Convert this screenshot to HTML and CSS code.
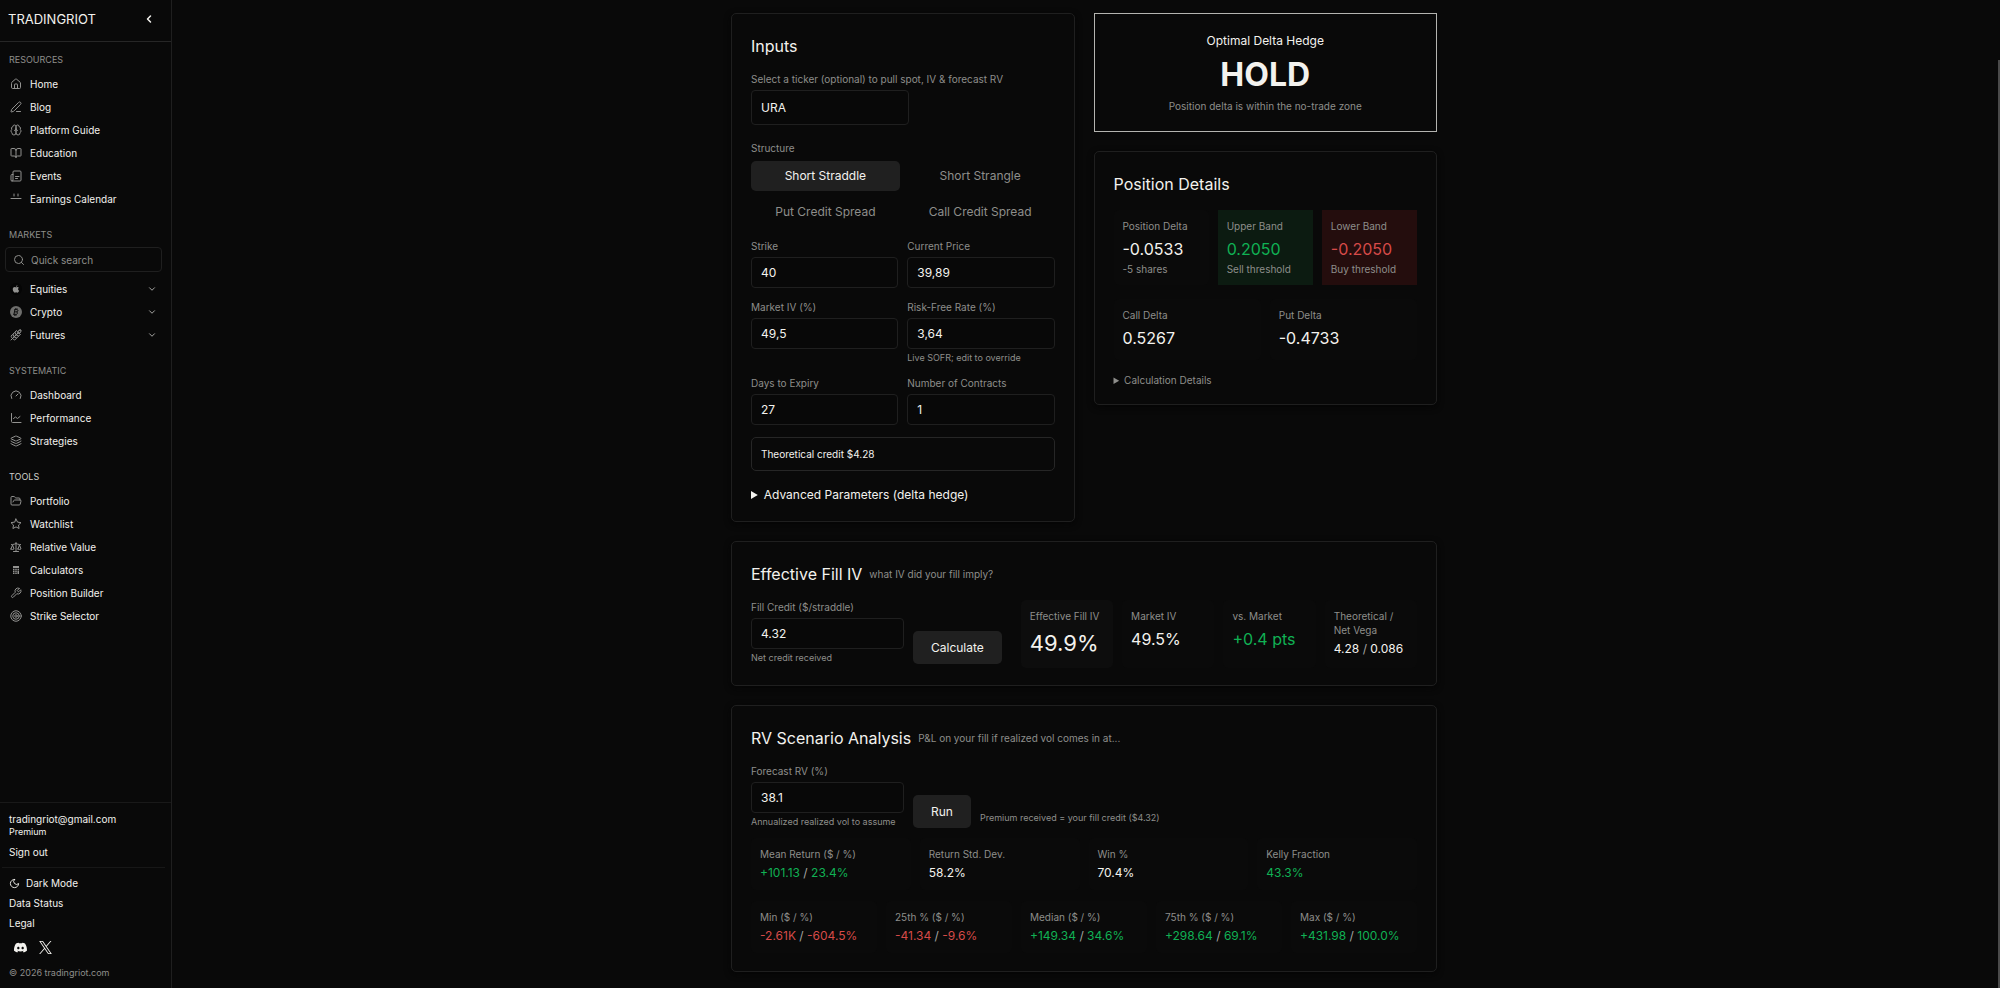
FILE: index.html
```html
<!DOCTYPE html>
<html lang="en">
<head>
<meta charset="utf-8">
<meta name="viewport" content="width=device-width, initial-scale=1">
<title>Short Vol Delta Hedge - TradingRiot</title>
<link rel="stylesheet" href="styles.css">
</head>
<body>
<div class="app">
  <aside class="sidebar">
    <header class="brand">
      <a class="brand-name" href="#">TRADINGRIOT</a>
      <button class="collapse" type="button" aria-label="Collapse sidebar"><svg class="icon" viewBox="0 0 24 24"><path d="m15 18-6-6 6-6"/></svg></button>
    </header>

    <nav class="nav">
      <section class="nav-group">
        <h2 class="nav-label">RESOURCES</h2>
        <a class="nav-item" href="#"><svg class="icon" viewBox="0 0 24 24"><path d="M15 21v-8a1 1 0 0 0-1-1h-4a1 1 0 0 0-1 1v8"/><path d="M3 10a2 2 0 0 1 .709-1.528l7-6a2 2 0 0 1 2.582 0l7 6A2 2 0 0 1 21 10v9a2 2 0 0 1-2 2H5a2 2 0 0 1-2-2z"/></svg>Home</a>
        <a class="nav-item" href="#"><svg class="icon" viewBox="0 0 24 24"><path d="M13 21h8"/><path d="M21.174 6.812a1 1 0 0 0-3.986-3.987L3.842 16.174a2 2 0 0 0-.5.83l-1.321 4.352a.5.5 0 0 0 .623.622l4.353-1.32a2 2 0 0 0 .83-.497z"/></svg>Blog</a>
        <a class="nav-item" href="#"><svg class="icon" viewBox="0 0 24 24"><path d="M12 5a3 3 0 1 0-5.997.125 4 4 0 0 0-2.526 5.77 4 4 0 0 0 .556 6.588A4 4 0 1 0 12 18Z"/><path d="M12 5a3 3 0 1 1 5.997.125 4 4 0 0 1 2.526 5.77 4 4 0 0 1-.556 6.588A4 4 0 1 1 12 18Z"/><path d="M15 13a4.500 4.500 0 0 1-3-4 4.500 4.500 0 0 1-3 4"/></svg>Platform Guide</a>
        <a class="nav-item" href="#"><svg class="icon" viewBox="0 0 24 24"><path d="M12 7v14"/><path d="M3 18a1 1 0 0 1-1-1V4a1 1 0 0 1 1-1h5a4 4 0 0 1 4 4 4 4 0 0 1 4-4h5a1 1 0 0 1 1 1v13a1 1 0 0 1-1 1h-6a3 3 0 0 0-3 3 3 3 0 0 0-3-3z"/></svg>Education</a>
        <a class="nav-item" href="#"><svg class="icon" viewBox="0 0 24 24"><path d="M4 22h16a2 2 0 0 0 2-2V4a2 2 0 0 0-2-2H8a2 2 0 0 0-2 2v16a2 2 0 0 1-4 0v-9a2 2 0 0 1 2-2h2"/><path d="M11 13h7M11 17h4"/></svg>Events</a>
        <a class="nav-item" href="#"><svg class="icon" viewBox="0 0 24 24"><path d="M8 2v4M16 2v4M2 11h20"/></svg>Earnings Calendar</a>
      </section>

      <section class="nav-group">
        <h2 class="nav-label">MARKETS</h2>
        <label class="search">
          <svg class="icon" viewBox="0 0 24 24"><circle cx="11" cy="11" r="8"/><path d="m21 21-4.300-4.300"/></svg>
          <input type="search" placeholder="Quick search" aria-label="Quick search">
        </label>
        <a class="nav-item" href="#"><svg class="icon solid" viewBox="0 0 24 24"><circle class="disc" cx="12" cy="12" r="12"/><path d="M12.200 8.600c.7 0 1.500-.6 2.700-.6 1.100 0 2.200.6 2.800 1.500-2.400 1.400-2 4.800.5 5.800-.6 1.700-2 4-3.500 4-.9 0-1.300-.6-2.500-.6s-1.600.6-2.500.6c-1.800 0-4.200-3.700-4.200-6.800 0-2.900 1.900-4.500 3.800-4.500 1.200 0 2.100.6 2.900.6zM14.900 4.500c.1 1.700-1.200 3.200-2.800 3.200-.1-1.600 1.300-3.100 2.800-3.200z"/></svg>Equities<svg class="icon chevron" viewBox="0 0 24 24"><path d="m6 9 6 6 6-6"/></svg></a>
        <a class="nav-item" href="#"><svg class="icon coin" viewBox="0 0 24 24"><circle cx="12" cy="12" r="12"/><path d="M9.700 7.200 8 16.600M9.700 7.200h4c3.500.4 2.700 4.200-.4 4.500H9.200M13 11.700c3.800.3 2.600 4.900-1 4.900H7.200M11.500 5l-.4 2M14 5.400l-.3 1.800M9.800 17l-.4 2M12.200 17l-.4 2"/></svg>Crypto<svg class="icon chevron" viewBox="0 0 24 24"><path d="m6 9 6 6 6-6"/></svg></a>
        <a class="nav-item" href="#"><svg class="icon" viewBox="0 0 24 24"><path d="M2 22 16 8"/><path d="M3.470 12.530 5 11l1.530 1.530a3.500 3.500 0 0 1 0 4.940L5 19l-1.530-1.530a3.500 3.500 0 0 1 0-4.940Z"/><path d="M7.470 8.530 9 7l1.530 1.530a3.500 3.500 0 0 1 0 4.940L9 15l-1.530-1.530a3.500 3.500 0 0 1 0-4.940Z"/><path d="M11.470 4.530 13 3l1.530 1.530a3.500 3.500 0 0 1 0 4.940L13 11l-1.530-1.530a3.500 3.500 0 0 1 0-4.940Z"/><path d="M20 2h2v2a4 4 0 0 1-4 4h-2V6a4 4 0 0 1 4-4Z"/><path d="M11.470 17.470 13 19l-1.530 1.530a3.500 3.500 0 0 1-4.940 0L5 19l1.530-1.530a3.500 3.500 0 0 1 4.940 0Z"/><path d="M15.470 13.470 17 15l-1.530 1.530a3.500 3.500 0 0 1-4.940 0L9 15l1.530-1.530a3.500 3.500 0 0 1 4.940 0Z"/><path d="M19.470 9.470 21 11l-1.530 1.530a3.500 3.500 0 0 1-4.940 0L13 11l1.530-1.530a3.500 3.500 0 0 1 4.940 0Z"/></svg>Futures<svg class="icon chevron" viewBox="0 0 24 24"><path d="m6 9 6 6 6-6"/></svg></a>
      </section>

      <section class="nav-group">
        <h2 class="nav-label">SYSTEMATIC</h2>
        <a class="nav-item" href="#"><svg class="icon" viewBox="0 0 24 24"><path d="m12 14 4-4"/><path d="M3.340 19a10 10 0 1 1 17.320 0"/></svg>Dashboard</a>
        <a class="nav-item" href="#"><svg class="icon" viewBox="0 0 24 24"><path d="M3 3v16a2 2 0 0 0 2 2h17"/><path d="m7 13 4-3 4 3 5-4"/></svg>Performance</a>
        <a class="nav-item" href="#"><svg class="icon" viewBox="0 0 24 24"><path d="M12.830 2.180a2 2 0 0 0-1.660 0L2.600 6.080a1 1 0 0 0 0 1.830l8.580 3.910a2 2 0 0 0 1.660 0l8.580-3.900a1 1 0 0 0 0-1.830z"/><path d="M2 12a1 1 0 0 0 .58.91l8.600 3.910a2 2 0 0 0 1.650 0l8.580-3.900A1 1 0 0 0 22 12"/><path d="M2 17a1 1 0 0 0 .58.91l8.600 3.910a2 2 0 0 0 1.650 0l8.580-3.900A1 1 0 0 0 22 17"/></svg>Strategies</a>
      </section>

      <section class="nav-group">
        <h2 class="nav-label current">TOOLS</h2>
        <a class="nav-item" href="#"><svg class="icon" viewBox="0 0 24 24"><path d="m6 14 1.500-2.900A2 2 0 0 1 9.240 10H20a2 2 0 0 1 1.940 2.500l-1.540 6a2 2 0 0 1-1.950 1.500H4a2 2 0 0 1-2-2V5a2 2 0 0 1 2-2h3.900a2 2 0 0 1 1.690.9l.81 1.200a2 2 0 0 0 1.670.9H18a2 2 0 0 1 2 2v2"/></svg>Portfolio</a>
        <a class="nav-item" href="#"><svg class="icon" viewBox="0 0 24 24"><path d="m12 2 3.090 6.260L22 9.270l-5 4.870 1.180 6.880L12 17.770l-6.180 3.250L7 14.140 2 9.270l6.910-1.010z"/></svg>Watchlist</a>
        <a class="nav-item" href="#"><svg class="icon" viewBox="0 0 24 24"><path d="m16 16 3-8 3 8c-.87.65-1.920 1-3 1s-2.130-.35-3-1ZM2 16l3-8 3 8c-.87.65-1.920 1-3 1s-2.130-.35-3-1ZM7 21h10M12 3v18M3 7h2c2 0 5-1 7-2 2 1 5 2 7 2h2"/></svg>Relative Value</a>
        <a class="nav-item" href="#"><svg class="icon solid" viewBox="0 0 24 24"><path d="M6 4h12v4H6zM6 9.500h3v3H6zM10.500 9.500h3v3h-3zM15 9.500h3v3h-3zM6 13.500h3v3H6zM10.500 13.500h3v3h-3zM15 13.500h3V20h-3zM6 17.500h3V20H6zM10.500 17.500h3V20h-3z"/></svg>Calculators</a>
        <a class="nav-item" href="#"><svg class="icon" viewBox="0 0 24 24"><path d="M14.700 6.300a1 1 0 0 0 0 1.400l1.600 1.600a1 1 0 0 0 1.400 0l3.770-3.770a6 6 0 0 1-7.940 7.940l-6.910 6.910a2.120 2.120 0 0 1-3-3l6.910-6.910a6 6 0 0 1 7.940-7.940z"/></svg>Position Builder</a>
        <a class="nav-item" href="#"><svg class="icon" viewBox="0 0 24 24"><circle cx="12" cy="12" r="10.500"/><circle cx="12" cy="12" r="6.500"/><circle cx="12" cy="12" r="2.500"/></svg>Strike Selector</a>
      </section>
    </nav>

    <footer class="account">
      <div class="user">
        <div class="email">tradingriot@gmail.com</div>
        <div class="plan">Premium</div>
        <button class="text-button" type="button">Sign out</button>
      </div>
      <div class="links">
        <button class="text-button theme" type="button"><svg class="icon" viewBox="0 0 24 24"><path d="M12 3a6 6 0 0 0 9 9 9 9 0 1 1-9-9Z"/></svg>Dark Mode</button>
        <a class="text-link" href="#">Data Status</a>
        <a class="text-link" href="#">Legal</a>
        <div class="social">
          <a href="#" aria-label="Discord"><svg viewBox="0 0 24 24"><path d="M20.300 4.400A19.800 19.800 0 0 0 15.400 3l-.6 1.300a18.300 18.300 0 0 0-5.500 0L8.600 3a19.700 19.700 0 0 0-4.900 1.400C.5 9-.3 13.600.1 18.100a20 20 0 0 0 6 3l1.300-2-1.900-.9.400-.3a14.200 14.200 0 0 0 12.100 0l.4.300-1.900.9 1.300 2a19.900 19.900 0 0 0 6-3c.5-5.200-.8-9.700-3.500-13.700zM8 15.300c-1.200 0-2.200-1.100-2.200-2.400s1-2.400 2.200-2.400 2.200 1.100 2.200 2.400-1 2.400-2.200 2.400zm8 0c-1.200 0-2.200-1.100-2.200-2.400s1-2.400 2.200-2.400 2.200 1.100 2.200 2.400-1 2.400-2.200 2.400z"/></svg></a>
          <a href="#" aria-label="X"><svg viewBox="0 0 24 24"><path d="M14.234 10.162 22.977 0h-2.072l-7.591 8.824L7.251 0H.258l9.168 13.343L.258 24H2.330l8.016-9.318L16.749 24h6.993zm-2.837 3.299-.929-1.329L3.076 1.560h3.182l5.965 8.532.929 1.329 7.754 11.090h-3.182z"/></svg></a>
        </div>
        <small class="copyright">© 2026 tradingriot.com</small>
      </div>
    </footer>
  </aside>

  <main class="content">
    <div class="page">
      <div class="columns">
        <section class="card">
          <h2 class="card-title">Inputs</h2>
          <div class="field ticker">
            <label for="ticker">Select a ticker (optional) to pull spot, IV &amp; forecast RV</label>
            <input id="ticker" type="text" value="URA">
          </div>
          <div class="structure" role="group" aria-labelledby="structure-label">
            <span id="structure-label" class="label">Structure</span>
            <div class="options">
              <button class="option selected" type="button" aria-pressed="true">Short Straddle</button>
              <button class="option" type="button" aria-pressed="false">Short Strangle</button>
              <button class="option" type="button" aria-pressed="false">Put Credit Spread</button>
              <button class="option" type="button" aria-pressed="false">Call Credit Spread</button>
            </div>
          </div>
          <div class="fields">
            <div class="field"><label for="strike">Strike</label><input id="strike" type="text" inputmode="decimal" value="40"></div>
            <div class="field"><label for="price">Current Price</label><input id="price" type="text" inputmode="decimal" value="39,89"></div>
            <div class="field"><label for="iv">Market IV (%)</label><input id="iv" type="text" inputmode="decimal" value="49,5"></div>
            <div class="field"><label for="rate">Risk-Free Rate (%)</label><input id="rate" type="text" inputmode="decimal" value="3,64"><small class="hint">Live SOFR; edit to override</small></div>
            <div class="field"><label for="days">Days to Expiry</label><input id="days" type="text" inputmode="numeric" value="27"></div>
            <div class="field"><label for="contracts">Number of Contracts</label><input id="contracts" type="text" inputmode="numeric" value="1"></div>
          </div>
          <div class="credit">Theoretical credit $4.28</div>
          <details class="advanced"><summary>Advanced Parameters (delta hedge)</summary></details>
        </section>

        <div class="stack">
          <section class="signal">
            <h2 class="signal-label">Optimal Delta Hedge</h2>
            <p class="signal-value">HOLD</p>
            <p class="label">Position delta is within the no-trade zone</p>
          </section>
          <section class="card">
            <h2 class="card-title">Position Details</h2>
            <div class="tiles three">
              <div class="tile"><span class="label">Position Delta</span><span class="value large">-0.0533</span><span class="label">-5 shares</span></div>
              <div class="tile upper"><span class="label">Upper Band</span><span class="value large gain">0.2050</span><span class="label">Sell threshold</span></div>
              <div class="tile lower"><span class="label">Lower Band</span><span class="value large loss">-0.2050</span><span class="label">Buy threshold</span></div>
            </div>
            <div class="tiles two">
              <div class="tile"><span class="label">Call Delta</span><span class="value large">0.5267</span></div>
              <div class="tile"><span class="label">Put Delta</span><span class="value large">-0.4733</span></div>
            </div>
            <details class="calculation"><summary>Calculation Details</summary></details>
          </section>
        </div>
      </div>

      <section class="card">
        <div class="heading"><h2 class="card-title">Effective Fill IV</h2><span class="label">what IV did your fill imply?</span></div>
        <div class="fill">
          <form class="form">
            <div class="field"><label for="fill">Fill Credit ($/straddle)</label><input id="fill" type="text" inputmode="decimal" value="4.32"><small class="hint">Net credit received</small></div>
            <button class="action" type="button">Calculate</button>
          </form>
          <div class="tiles four">
            <div class="tile accent"><span class="label">Effective Fill IV</span><span class="value huge">49.9%</span></div>
            <div class="tile"><span class="label">Market IV</span><span class="value large">49.5%</span></div>
            <div class="tile"><span class="label">vs. Market</span><span class="value large gain">+0.4 pts</span></div>
            <div class="tile"><span class="label">Theoretical / Net Vega</span><span class="value">4.28 <i>/</i> 0.086</span></div>
          </div>
        </div>
      </section>

      <section class="card">
        <div class="heading"><h2 class="card-title">RV Scenario Analysis</h2><span class="label">P&amp;L on your fill if realized vol comes in at...</span></div>
        <form class="form">
          <div class="field"><label for="rv">Forecast RV (%)</label><input id="rv" type="text" inputmode="decimal" value="38.1"><small class="hint">Annualized realized vol to assume</small></div>
          <button class="action" type="button">Run</button>
          <small class="hint note">Premium received = your fill credit ($4.32)</small>
        </form>
        <div class="results">
          <div class="tiles four">
            <div class="tile"><span class="label">Mean Return ($ / %)</span><span class="value gain">+101.13 <i>/</i> 23.4%</span></div>
            <div class="tile"><span class="label">Return Std. Dev.</span><span class="value">58.2%</span></div>
            <div class="tile"><span class="label">Win %</span><span class="value">70.4%</span></div>
            <div class="tile"><span class="label">Kelly Fraction</span><span class="value gain">43.3%</span></div>
          </div>
          <div class="tiles five">
            <div class="tile"><span class="label">Min ($ / %)</span><span class="value loss">-2.61K <i>/</i> -604.5%</span></div>
            <div class="tile"><span class="label">25th % ($ / %)</span><span class="value loss">-41.34 <i>/</i> -9.6%</span></div>
            <div class="tile"><span class="label">Median ($ / %)</span><span class="value gain">+149.34 <i>/</i> 34.6%</span></div>
            <div class="tile"><span class="label">75th % ($ / %)</span><span class="value gain">+298.64 <i>/</i> 69.1%</span></div>
            <div class="tile"><span class="label">Max ($ / %)</span><span class="value gain">+431.98 <i>/</i> 100.0%</span></div>
          </div>
        </div>
      </section>
    </div>
    <div class="scroll-thumb"></div>
  </main>
</div>
</body>
</html>
```

FILE: styles.css
```css
:root {
  --bg: #090909;
  --line: #1f1f1f;
  --text: #f3f2ee;
  --muted: #8e8e8b;
  --gain: #10b154;
  --loss: #d64a48;
}

* { box-sizing: border-box; }

body {
  margin: 0;
  background: var(--bg);
  color: var(--text);
  font: 12px/16px Inter, "Liberation Sans", sans-serif;
}

h2, p { margin: 0; font-weight: 400; }
a { color: inherit; text-decoration: none; }
button, input { font: inherit; color: inherit; }
button { border: 0; padding: 0; background: none; cursor: pointer; }

.app { display: grid; grid-template-columns: 172px minmax(0, 1fr); min-height: 100vh; }

.icon {
  width: 12px;
  height: 12px;
  flex: none;
  fill: none;
  stroke: currentColor;
  stroke-width: 2;
  stroke-linecap: round;
  stroke-linejoin: round;
}

/* Sidebar */
.sidebar { display: flex; flex-direction: column; border-right: 1px solid var(--line); }
.brand {
  display: flex;
  align-items: center;
  justify-content: space-between;
  height: 42px;
  padding: 0 16px 4px 8px;
  border-bottom: 1px solid #262626;
}
.brand-name { font-size: 13px; }
.collapse { display: flex; }
.collapse .icon { stroke-width: 3; }

.nav { flex: 1; padding: 11px 0 0; }
.nav-group { margin-bottom: 18px; }
.nav-label { padding: 0 9px; margin-bottom: 5px; font-size: 9px; line-height: 14px; color: var(--muted); }
.nav-label.current { color: #d0d0cc; }
.nav-item { display: flex; align-items: center; gap: 8px; height: 23px; padding: 0 14px 0 10px; font-size: 10px; }
.nav-item .icon { color: #929290; }
.nav-item .chevron { margin-left: auto; color: #c4c4c0; width: 10px; height: 10px; }
.icon.solid { fill: currentColor; stroke: none; }
.icon .disc { fill: #050505; }
.coin circle { fill: #6e6e6c; stroke: none; }
.coin path { stroke: #111; }

.search {
  display: flex;
  align-items: center;
  gap: 6px;
  height: 25px;
  margin: 0 9px 5px 5px;
  padding: 0 7px;
  border: 1px solid var(--line);
  border-radius: 4px;
  color: var(--muted);
}
.search input { flex: 1; min-width: 0; padding: 0; border: 0; outline: 0; background: none; font-size: 10px; }
.search input::placeholder { color: var(--muted); }

.account { border-top: 1px solid #191919; padding-top: 9px; font-size: 10px; line-height: 14px; }
.user { margin: 0 6px 0 2px; padding: 0 7px 8px; border-bottom: 1px solid #171717; }
.plan { font-size: 9px; line-height: 12px; margin-bottom: 7px; }
.text-button { display: block; }
.links { display: flex; flex-direction: column; align-items: flex-start; gap: 6px; padding: 8px 9px; }
.theme { display: flex; align-items: center; gap: 6px; }
.theme .icon { width: 11px; height: 11px; }
.social { display: flex; gap: 12px; padding: 5px 5px 6px; }
.social a { display: flex; }
.social svg { width: 13px; height: 13px; fill: currentColor; }
.copyright { font-size: 9px; line-height: 14px; color: var(--muted); }

/* Main column */
.content { position: relative; padding: 13px 4px 15px 0; }
.page { display: flex; flex-direction: column; gap: 19px; max-width: 706px; margin: 0 auto; }
.columns { display: grid; grid-template-columns: 1fr 1fr; gap: 19px; align-items: start; }
.stack { display: flex; flex-direction: column; gap: 19px; }
.scroll-thumb { position: absolute; top: 60px; right: 0; bottom: 0; width: 2px; background: #4a4a4a; }

.card {
  padding: 19px 19px 17px;
  border: 1px solid var(--line);
  border-radius: 5px;
  box-shadow: 0 2px 6px #050505;
}
.card-title { margin-bottom: 13px; font-size: 16px; line-height: 26px; }
.heading { display: flex; align-items: center; gap: 7px; margin-bottom: 13px; }
.heading .card-title { margin-bottom: 0; }

.label, .field label { display: block; font-size: 10px; line-height: 14px; color: var(--muted); }
.hint { display: block; margin-top: 3px; font-size: 9px; line-height: 12px; color: var(--muted); }

.field label { margin-bottom: 4px; }
.field input {
  display: block;
  width: 100%;
  height: 31px;
  padding: 0 9px;
  border: 1px solid var(--line);
  border-radius: 4px;
  background: #080808;
  outline: 0;
}
.field.ticker input { width: 158px; height: 35px; }

.structure { margin: 16px 0 12px; }
.options { display: grid; grid-template-columns: 1fr 1fr; gap: 6px; margin-top: 6px; }
.option { height: 30px; border-radius: 5px; color: var(--muted); }
.option.selected { background: #202020; color: var(--text); }

.fields { display: grid; grid-template-columns: 1fr 1fr; gap: 12px 9px; }
.credit { margin: 12px 0 15px; padding: 9px; border: 1px solid #262626; border-radius: 5px; font-size: 10px; line-height: 14px; }
.advanced summary { font-size: 12px; line-height: 18px; }
.calculation { margin-top: 13px; color: var(--muted); }
.calculation summary { font-size: 10px; line-height: 14px; }

.signal { padding: 18px; border: 1px solid #b4b4b0; text-align: center; }
.signal-label { font-size: 12px; line-height: 18px; }
.signal-value { margin: 9px 0 8px; font-size: 32px; line-height: 32px; font-weight: 700; }

.tiles { display: grid; gap: 9px; }
.tiles + .tiles { margin-top: 14px; }
.results .tiles + .tiles { margin-top: 11px; }
.two { grid-template-columns: repeat(2, minmax(0, 1fr)); }
.three { grid-template-columns: repeat(3, minmax(0, 1fr)); }
.four { grid-template-columns: repeat(4, minmax(0, 1fr)); }
.five { grid-template-columns: repeat(5, minmax(0, 1fr)); }
.tile { padding: 9px; border-radius: 5px; background: #0a0a0a; }
.tile.accent { background: #0d0d0d; }
.tile.upper { border-radius: 0; background: #0c1b11; }
.tile.lower { border-radius: 0; background: #240d0d; }
.value { display: block; margin-top: 4px; white-space: nowrap; }
.value i { font-style: normal; color: #a5a5a2; }
.value.large { font-size: 16px; line-height: 25px; }
.value.huge { font-size: 22px; line-height: 32px; }
.gain { color: var(--gain); }
.loss { color: var(--loss); }

.form { display: flex; align-items: flex-end; gap: 9px; }
.form .field { width: 153px; }
.action { height: 33px; padding: 0 18px; border-radius: 5px; background: #202020; }
.note { padding-bottom: 4px; }
.fill { display: grid; grid-template-columns: auto minmax(0, 1fr); gap: 19px; align-items: start; }
.results { margin-top: 10px; padding-bottom: 1px; }
```
